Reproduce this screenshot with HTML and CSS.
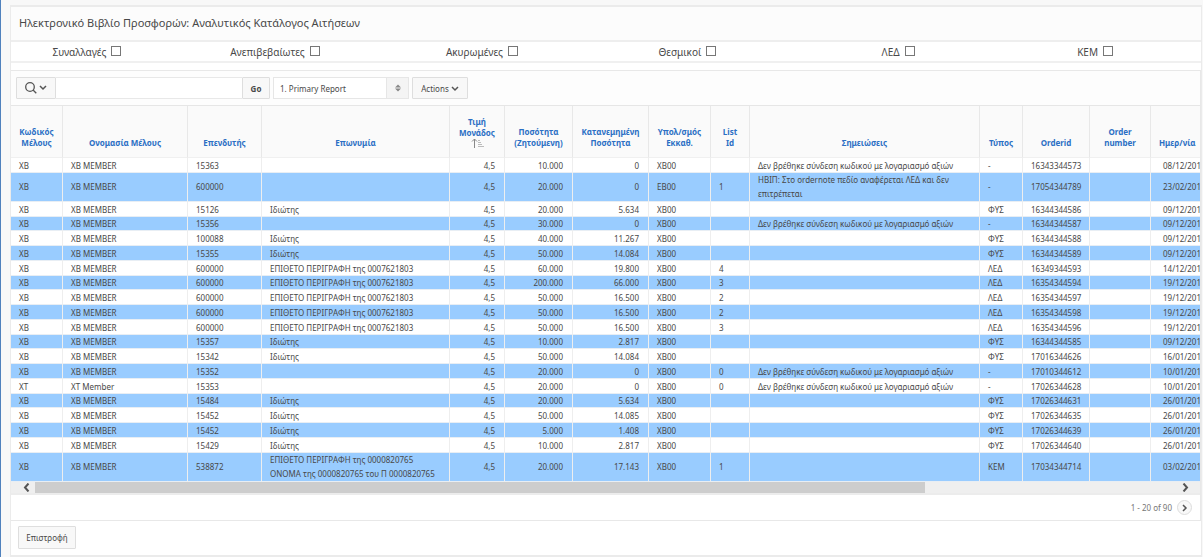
FILE: index.html
```html
<!DOCTYPE html>
<html lang="el">
<head>
<meta charset="utf-8">
<title>Ηλεκτρονικό Βιβλίο Προσφορών</title>
<link rel="stylesheet" href="styles.css">
</head>
<body>
<main class="panel">
<h1 class="title">Ηλεκτρονικό Βιβλίο Προσφορών: Αναλυτικός Κατάλογος Αιτήσεων</h1>
<div class="filters">
<label class="filter">Συναλλαγές <input type="checkbox"></label>
<label class="filter">Ανεπιβεβαίωτες <input type="checkbox"></label>
<label class="filter">Ακυρωμένες <input type="checkbox"></label>
<label class="filter">Θεσμικοί <input type="checkbox"></label>
<label class="filter">ΛΕΔ <input type="checkbox"></label>
<label class="filter">ΚΕΜ <input type="checkbox"></label>
</div>
<section class="report">
<div class="toolbar">
<div class="search">
<button class="btn search-menu" type="button" aria-label="Search columns">
<svg width="22" height="12" viewBox="0 0 22 12"><circle cx="5" cy="5" r="4.300" class="lens"/><path d="M8 8l3.300 3.300" class="lens"/><path d="M15 4l3 3 3-3" class="thick"/></svg>
</button>
<input class="search-text" type="text" aria-label="Search">
<button class="btn go" type="button">Go</button>
</div>
<div class="select-wrap">
<select class="select" aria-label="Report"><option>1. Primary Report</option></select>
<span class="select-arrow"><svg width="6" height="8" viewBox="0 0 6 8"><path d="M0 3.500L3 0.500L6 3.500ZM0 4.500L3 7.500L6 4.500Z"/></svg></span>
</div>
<button class="btn actions" type="button">Actions <svg width="8" height="6" viewBox="0 0 8 6"><path d="M1 1l3 3 3-3" class="thick"/></svg></button>
</div>
<div class="scroller">
<table class="grid">
<colgroup><col class="c-code"><col class="c-member"><col class="c-investor"><col class="c-name"><col class="c-price"><col class="c-qty"><col class="c-alloc"><col class="c-sub"><col class="c-list"><col class="c-notes"><col class="c-type"><col class="c-order"><col class="c-number"><col class="c-date"></colgroup>
<thead><tr><th>Κωδικός<br>Μέλους</th><th>Ονομασία Μέλους</th><th>Επενδυτής</th><th>Επωνυμία</th><th>Τιμή<br>Μονάδος<br><svg class="sort" width="13" height="10" viewBox="0 0 13 10"><path d="M3.500 10V1M1 3.500l2.500-2.500 2.500 2.500" class="arrow"/><path d="M7 2.500h2M7 4.500h3M7 6.500h4M7 8.500h6" class="bars"/></svg></th><th>Ποσότητα<br>(Ζητούμενη)</th><th>Κατανεμημένη<br>Ποσότητα</th><th>Υπολ/σμός<br>Εκκαθ.</th><th>List<br>Id</th><th>Σημειώσεις</th><th>Τύπος</th><th>Orderid</th><th>Order<br>number</th><th class="date">Ημερ/νία</th></tr></thead>
<tbody>
<tr><td>XB</td><td>XB MEMBER</td><td>15363</td><td></td><td class="n">4,5</td><td class="n">10.000</td><td class="n">0</td><td>XB00</td><td></td><td>Δεν βρέθηκε σύνδεση κωδικού με λογαριασμό αξιών</td><td>-</td><td>16343344573</td><td></td><td class="date">08/12/201</td></tr>
<tr class="tall"><td>XB</td><td>XB MEMBER</td><td>600000</td><td></td><td class="n">4,5</td><td class="n">20.000</td><td class="n">0</td><td>EB00</td><td>1</td><td>ΗΒΙΠ: Στο ordernote πεδίο αναφέρεται ΛΕΔ και δεν<br>επιτρέπεται</td><td>-</td><td>17054344789</td><td></td><td class="date">23/02/201</td></tr>
<tr><td>XB</td><td>XB MEMBER</td><td>15126</td><td>Ιδιώτης</td><td class="n">4,5</td><td class="n">20.000</td><td class="n">5.634</td><td>XB00</td><td></td><td></td><td>ΦΥΣ</td><td>16344344586</td><td></td><td class="date">09/12/201</td></tr>
<tr><td>XB</td><td>XB MEMBER</td><td>15356</td><td></td><td class="n">4,5</td><td class="n">30.000</td><td class="n">0</td><td>XB00</td><td></td><td>Δεν βρέθηκε σύνδεση κωδικού με λογαριασμό αξιών</td><td>-</td><td>16344344587</td><td></td><td class="date">09/12/201</td></tr>
<tr><td>XB</td><td>XB MEMBER</td><td>100088</td><td>Ιδιώτης</td><td class="n">4,5</td><td class="n">40.000</td><td class="n">11.267</td><td>XB00</td><td></td><td></td><td>ΦΥΣ</td><td>16344344588</td><td></td><td class="date">09/12/201</td></tr>
<tr><td>XB</td><td>XB MEMBER</td><td>15355</td><td>Ιδιώτης</td><td class="n">4,5</td><td class="n">50.000</td><td class="n">14.084</td><td>XB00</td><td></td><td></td><td>ΦΥΣ</td><td>16344344589</td><td></td><td class="date">09/12/201</td></tr>
<tr><td>XB</td><td>XB MEMBER</td><td>600000</td><td>ΕΠΙΘΕΤΟ ΠΕΡΙΓΡΑΦΗ της 0007621803</td><td class="n">4,5</td><td class="n">60.000</td><td class="n">19.800</td><td>XB00</td><td>4</td><td></td><td>ΛΕΔ</td><td>16349344593</td><td></td><td class="date">14/12/201</td></tr>
<tr><td>XB</td><td>XB MEMBER</td><td>600000</td><td>ΕΠΙΘΕΤΟ ΠΕΡΙΓΡΑΦΗ της 0007621803</td><td class="n">4,5</td><td class="n">200.000</td><td class="n">66.000</td><td>XB00</td><td>3</td><td></td><td>ΛΕΔ</td><td>16354344594</td><td></td><td class="date">19/12/201</td></tr>
<tr><td>XB</td><td>XB MEMBER</td><td>600000</td><td>ΕΠΙΘΕΤΟ ΠΕΡΙΓΡΑΦΗ της 0007621803</td><td class="n">4,5</td><td class="n">50.000</td><td class="n">16.500</td><td>XB00</td><td>2</td><td></td><td>ΛΕΔ</td><td>16354344597</td><td></td><td class="date">19/12/201</td></tr>
<tr><td>XB</td><td>XB MEMBER</td><td>600000</td><td>ΕΠΙΘΕΤΟ ΠΕΡΙΓΡΑΦΗ της 0007621803</td><td class="n">4,5</td><td class="n">50.000</td><td class="n">16.500</td><td>XB00</td><td>2</td><td></td><td>ΛΕΔ</td><td>16354344598</td><td></td><td class="date">19/12/201</td></tr>
<tr><td>XB</td><td>XB MEMBER</td><td>600000</td><td>ΕΠΙΘΕΤΟ ΠΕΡΙΓΡΑΦΗ της 0007621803</td><td class="n">4,5</td><td class="n">50.000</td><td class="n">16.500</td><td>XB00</td><td>3</td><td></td><td>ΛΕΔ</td><td>16354344596</td><td></td><td class="date">19/12/201</td></tr>
<tr><td>XB</td><td>XB MEMBER</td><td>15357</td><td>Ιδιώτης</td><td class="n">4,5</td><td class="n">10.000</td><td class="n">2.817</td><td>XB00</td><td></td><td></td><td>ΦΥΣ</td><td>16344344585</td><td></td><td class="date">09/12/201</td></tr>
<tr><td>XB</td><td>XB MEMBER</td><td>15342</td><td>Ιδιώτης</td><td class="n">4,5</td><td class="n">50.000</td><td class="n">14.084</td><td>XB00</td><td></td><td></td><td>ΦΥΣ</td><td>17016344626</td><td></td><td class="date">16/01/201</td></tr>
<tr><td>XB</td><td>XB MEMBER</td><td>15352</td><td></td><td class="n">4,5</td><td class="n">20.000</td><td class="n">0</td><td>XB00</td><td>0</td><td>Δεν βρέθηκε σύνδεση κωδικού με λογαριασμό αξιών</td><td>-</td><td>17010344612</td><td></td><td class="date">10/01/201</td></tr>
<tr><td>XT</td><td>XT Member</td><td>15353</td><td></td><td class="n">4,5</td><td class="n">20.000</td><td class="n">0</td><td>XB00</td><td>0</td><td>Δεν βρέθηκε σύνδεση κωδικού με λογαριασμό αξιών</td><td>-</td><td>17026344628</td><td></td><td class="date">10/01/201</td></tr>
<tr><td>XB</td><td>XB MEMBER</td><td>15484</td><td>Ιδιώτης</td><td class="n">4,5</td><td class="n">20.000</td><td class="n">5.634</td><td>XB00</td><td></td><td></td><td>ΦΥΣ</td><td>17026344631</td><td></td><td class="date">26/01/201</td></tr>
<tr><td>XB</td><td>XB MEMBER</td><td>15452</td><td>Ιδιώτης</td><td class="n">4,5</td><td class="n">50.000</td><td class="n">14.085</td><td>XB00</td><td></td><td></td><td>ΦΥΣ</td><td>17026344635</td><td></td><td class="date">26/01/201</td></tr>
<tr><td>XB</td><td>XB MEMBER</td><td>15452</td><td>Ιδιώτης</td><td class="n">4,5</td><td class="n">5.000</td><td class="n">1.408</td><td>XB00</td><td></td><td></td><td>ΦΥΣ</td><td>17026344639</td><td></td><td class="date">26/01/201</td></tr>
<tr><td>XB</td><td>XB MEMBER</td><td>15429</td><td>Ιδιώτης</td><td class="n">4,5</td><td class="n">10.000</td><td class="n">2.817</td><td>XB00</td><td></td><td></td><td>ΦΥΣ</td><td>17026344640</td><td></td><td class="date">26/01/201</td></tr>
<tr class="tall"><td>XB</td><td>XB MEMBER</td><td>538872</td><td>ΕΠΙΘΕΤΟ ΠΕΡΙΓΡΑΦΗ της 0000820765<br>ΟΝΟΜΑ της 0000820765 του Π 0000820765</td><td class="n">4,5</td><td class="n">20.000</td><td class="n">17.143</td><td>XB00</td><td>1</td><td></td><td>ΚΕΜ</td><td>17034344714</td><td></td><td class="date">03/02/201</td></tr>
</tbody>
</table>
</div>
<div class="scrollbar">
<button class="scroll-btn" type="button" aria-label="Scroll left"><svg width="7" height="9" viewBox="0 0 7 9"><path d="M5.500 0.500L2 4.500L5.500 8.500"/></svg></button>
<div class="track"><div class="thumb"></div></div>
<button class="scroll-btn right" type="button" aria-label="Scroll right"><svg width="7" height="9" viewBox="0 0 7 9"><path d="M1.500 0.500L5 4.500L1.500 8.500"/></svg></button>
</div>
<div class="pager"><span>1 - 20 of 90</span><button class="next" type="button" aria-label="Next"><svg width="6" height="8" viewBox="0 0 6 8"><path d="M1 1l3 3-3 3"/></svg></button></div>
</section>
<div class="footer"><button class="btn back" type="button">Επιστροφή</button></div>
</main>
</body>
</html>
```
FILE: styles.css
```css
* { box-sizing: border-box; }
body {
  margin: 0;
  padding: 5px 1px 0 9px;
  border-left: 1px solid #4f81bd;
  min-height: 100vh;
  background: #f8f8f8;
  color: #484848;
  font-family: "Noto Sans", "Open Sans", sans-serif;
  font-size: 8px;
}
button, input, select { font: inherit; color: inherit; margin: 0; }
svg { fill: none; stroke: #555; }
.thick { stroke-width: 1.5; }
.lens { stroke-width: 1.3; }

.panel { background: #fff; border: 1px solid #ebebeb; border-top-width: 2px; border-bottom-width: 2px; }
.title {
  margin: 0;
  padding: 8px 9px 9px 8px;
  background: #fcfcfc;
  border-bottom: 2px solid #eee;
  font-size: 11px;
  line-height: 16px;
  font-weight: 400;
}
.filters { display: grid; grid-template-columns: repeat(6, 1fr); border-bottom: 2px solid #f0f0f0; }
.filter {
  display: flex;
  justify-content: flex-end;
  align-items: center;
  gap: 5px;
  padding-right: 88px;
  height: 19px;
  font-size: 10px;
  white-space: nowrap;
}
.filter input { appearance: none; width: 10px; height: 10px; margin-bottom: 2px; border: 1px solid #777; background: #fff; }

.report { margin-top: 7px; border: 1px solid #e8e8e8; border-width: 1px 1px 1px 0; }
.toolbar { display: flex; gap: 3px; padding: 6px 5px 6px; height: 34px; background: #fdfdfd; }
.btn { padding: 0; border: 1px solid #dedede; border-radius: 1px; background: #f8f8f8; }
.search { display: flex; width: 254px; }
.search-menu { width: 40px; display: flex; align-items: center; justify-content: center; }
.search-text { flex: 1; min-width: 0; border: 1px solid #e8e8e8; border-width: 1px 0; background: #fff; }
.go { width: 28px; font-weight: 700; }
.select-wrap { display: flex; width: 136px; border: 1px solid #e6e6e6; background: #fff; }
.select { flex: 1; appearance: none; border: 0; background: none; padding: 0 6px; }
.select-arrow { display: flex; align-items: center; justify-content: center; width: 22px; border-left: 1px solid #e6e6e6; background: #f4f4f4; }
.select-arrow svg { fill: #888; stroke: none; }
.actions { width: 56px; }

.scroller { overflow: hidden; border-top: 1px solid #e6e6e6; }
.grid { width: 100%; min-width: 1188px; table-layout: fixed; border-collapse: separate; border-spacing: 0; }
.c-code { width: 52px; }
.c-member { width: 125px; }
.c-investor { width: 74px; }
.c-name { width: 188px; }
.c-price { width: 55px; }
.c-qty { width: 68px; }
.c-alloc { width: 76px; }
.c-sub { width: 62px; }
.c-list { width: 39px; }
.c-type { width: 43px; }
.c-order { width: 67px; }
.c-number { width: 61px; }
.c-date { width: 49px; }
.grid th {
  height: 52px;
  padding: 0 0 9px;
  vertical-align: bottom;
  background: #fafafa;
  border-right: 1px solid #e8e8e8;
  border-bottom: 1px solid #f0f0f0;
  color: #2b6fc4;
  font-size: 8px;
  line-height: 11px;
  font-weight: 700;
}
.grid td {
  height: 15px;
  padding: 0 8px;
  border-right: 1px solid #eee;
  border-bottom: 1px solid #e8eef4;
  line-height: 13px;
  white-space: nowrap;
}
.grid tr:nth-child(4n) td { height: 14px; }
.grid tr.tall td { height: 29px; line-height: 14px; }
.grid tbody tr:nth-child(even) td { background: #99ccff; }
.grid .n { text-align: right; padding-right: 9px; }
.grid th.date { padding-left: 8px; text-align: left; border-right: 0; }
.grid td.date { padding: 0 0 0 12px; border-right: 0; }
.sort { display: block; margin: 0 auto; height: 10px; }
.sort .arrow { stroke: #888; }
.sort .bars { stroke: #bbb; }

.scrollbar { display: flex; height: 13px; background: #efefef; border-bottom: 2px solid #ececec; }
.scroll-btn { width: 24px; padding: 0 0 0 6px; border: 0; background: none; display: flex; align-items: center; justify-content: center; }
.scroll-btn.right { padding: 0 6px 0 0; }
.scroll-btn svg { stroke-width: 2; }
.track { flex: 1; }
.thumb { width: 78%; height: 11px; background: #cdcdcd; }

.pager { display: flex; align-items: center; justify-content: flex-end; gap: 5px; height: 25px; padding-right: 8px; color: #777; }
.next { width: 15px; height: 15px; padding: 0; border: 1px solid #ddd; border-radius: 50%; background: #f8f8f8; display: flex; align-items: center; justify-content: center; }
.next svg { stroke-width: 1.5; }
.footer { padding: 5px 7px 6px; }
.back { display: block; width: 58px; height: 23px; }
```
